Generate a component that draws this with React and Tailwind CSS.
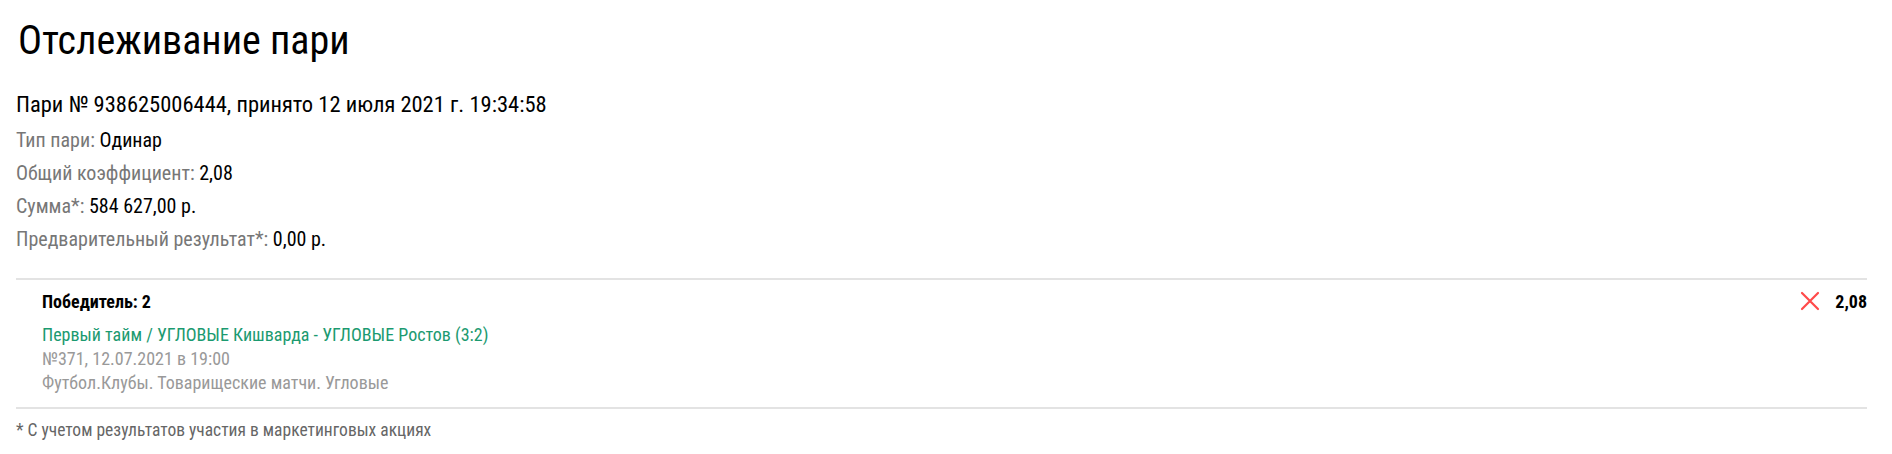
const Row = ({ label, value }) => (
  <div className="text-[20px] leading-[33px]">
    <span className="text-[#777777]">{label}: </span>
    <span className="text-black">{value}</span>
  </div>
);

export default function App() {
  return (
    <div
      className="bg-white w-[1892px] h-[454px] pl-4 pr-[25px] pt-[17px] font-stretch-condensed"
      style={{ fontFamily: '"Roboto Condensed", Roboto, sans-serif' }}
    >
      <h1 className="text-[40px] leading-[48px] text-black pl-[2px]">Отслеживание пари</h1>

      <div className="mt-[26px] text-[22.5px] leading-[26px] text-black">
        Пари № 938625006444, принято 12 июля 2021 г. 19:34:58
      </div>

      <div className="mt-[7px]">
        <Row label="Тип пари" value="Одинар" />
        <Row label="Общий коэффициент" value="2,08" />
        <Row label="Сумма*" value="584 627,00 р." />
        <Row label="Предварительный результат*" value="0,00 р." />
      </div>

      <div className="mt-[22px] border-t-2 border-b-2 border-[#e3e3e3] flex justify-between pl-[26px] pt-[10px] pb-[12px]">
        <div className="text-[18px] leading-[24px]">
          <div className="font-bold text-black mb-[9px]">Победитель: 2</div>
          <div className="text-[#1b9a70]">Первый тайм / УГЛОВЫЕ Кишварда - УГЛОВЫЕ Ростов (3:2)</div>
          <div className="text-[#999999]">№371, 12.07.2021 в 19:00</div>
          <div className="text-[#999999]">Футбол.Клубы. Товарищеские матчи. Угловые</div>
        </div>
        <div className="flex items-start gap-[15px]">
          <svg width="20" height="20" viewBox="0 0 20 20" className="mt-[1px]">
            <path d="M2 2 L18 18 M18 2 L2 18" stroke="#ff4a4a" strokeWidth="2.2" strokeLinecap="round" />
          </svg>
          <span className="font-bold text-[18px] leading-[24px] text-black">2,08</span>
        </div>
      </div>

      <div className="mt-[9px] text-[17.5px] leading-[24px] text-[#666666]">
        * С учетом результатов участия в маркетинговых акциях
      </div>
    </div>
  );
}
